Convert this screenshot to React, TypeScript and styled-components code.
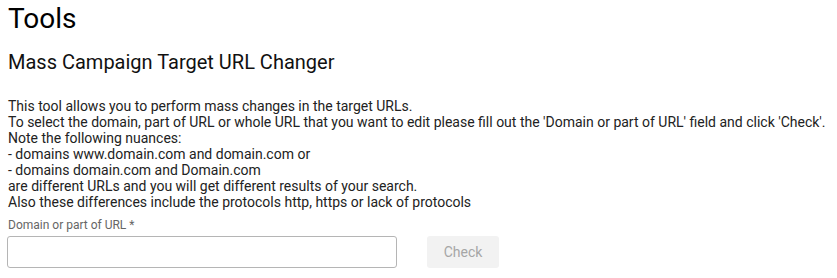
import React from "react";
import styled, { createGlobalStyle } from "styled-components";

const Global = createGlobalStyle`
  html, body { margin: 0; padding: 0; background: #fff; }
  body { font-family: Roboto, "Liberation Sans", sans-serif; color: #212121; }
  * { box-sizing: border-box; }
`;

const Page = styled.div`
  padding: 0 8px;
  display: flex;
  flex-direction: column;
`;

const Title = styled.h1`
  margin: 2px 0 0;
  font-size: 28px;
  font-weight: 400;
  line-height: 34px;
  color: #000;
`;

const Subtitle = styled.h2`
  margin: 14px 0 0;
  font-size: 20px;
  font-weight: 400;
  line-height: 24px;
  color: #111;
`;

const Description = styled.div`
  margin-top: 24px;
  font-size: 14px;
  line-height: 16px;
  color: #222;
`;

const Line = styled.div``;

const FieldLabel = styled.label`
  margin-top: 8px;
  font-size: 12px;
  line-height: 14px;
  color: #666;
`;

const FieldRow = styled.div`
  margin-top: 4px;
  display: flex;
  align-items: center;
  gap: 30px;
`;

const TextInput = styled.input`
  width: 390px;
  height: 32px;
  margin-left: -1px;
  border: 1px solid #b5b5b5;
  border-radius: 3px;
  padding: 0 8px;
  font-family: inherit;
  font-size: 14px;
  outline: none;
`;

const CheckButton = styled.button`
  width: 72px;
  height: 32px;
  border: none;
  border-radius: 3px;
  background: #f2f2f2;
  color: #a6a6a6;
  font-family: inherit;
  font-size: 14px;
`;

const lines = [
  "This tool allows you to perform mass changes in the target URLs.",
  "To select the domain, part of URL or whole URL that you want to edit please fill out the 'Domain or part of URL' field and click 'Check'.",
  "Note the following nuances:",
  "- domains www.domain.com and domain.com or",
  "- domains domain.com and Domain.com",
  "are different URLs and you will get different results of your search.",
  "Also these differences include the protocols http, https or lack of protocols",
];

export default function App() {
  return (
    <>
      <Global />
      <Page>
        <Title>Tools</Title>
        <Subtitle>Mass Campaign Target URL Changer</Subtitle>
        <Description>
          {lines.map((l, i) => (
            <Line key={i}>{l}</Line>
          ))}
        </Description>
        <FieldLabel>Domain or part of URL *</FieldLabel>
        <FieldRow>
          <TextInput />
          <CheckButton disabled>Check</CheckButton>
        </FieldRow>
      </Page>
    </>
  );
}
